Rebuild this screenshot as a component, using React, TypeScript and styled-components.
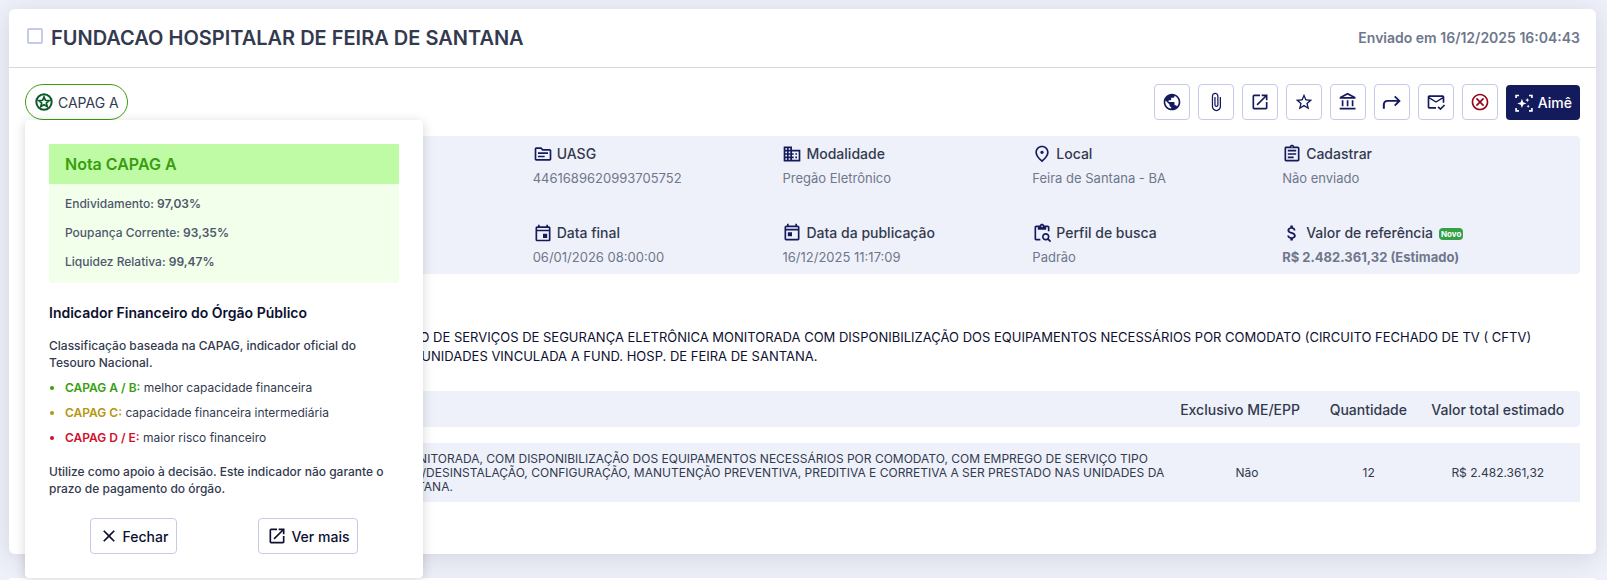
import type { ReactNode } from 'react';
import styled, { createGlobalStyle } from 'styled-components';
import {
  MdAttachFile,
  MdAttachMoney,
  MdClose,
  MdContentPasteSearch,
  MdDomain,
  MdOpenInNew,
  MdOutlineAccountBalance,
  MdOutlineAssignment,
  MdOutlineCancel,
  MdOutlineEvent,
  MdOutlineMarkEmailRead,
  MdOutlinePlace,
  MdOutlineSource,
  MdOutlineToday,
  MdPublic,
  MdStarBorder,
} from 'react-icons/md';

const color = {
  navy: '#141b5c',
  ink: '#0d1030',
  text: '#333a4f',
  muted: '#6e778c',
  panel: '#eef1f9',
  border: '#c5cae9',
};

const GlobalStyle = createGlobalStyle`
  *, *::before, *::after { box-sizing: border-box; }
  body {
    margin: 0;
    background: #eef0fa;
    color: ${color.text};
    font-family: Inter, "Liberation Sans", sans-serif;
    font-size: 14px;
  }
  h1, h2, h3, p, ul, dl, dd { margin: 0; padding: 0; }
  button { font-family: inherit; cursor: pointer; }
  svg { flex: none; }
`;

const Page = styled.main`
  display: flex;
  flex-direction: column;
  gap: 24px;
  min-height: 100vh;
  padding: 9px 11px 0 9px;
`;

const Card = styled.article`
  border-radius: 6px;
  background: #fff;
  box-shadow: 0 4px 24px rgba(40, 50, 60, 0.14);
`;

const NextCard = styled(Card)`
  flex: 1;
  border-radius: 6px 6px 0 0;
`;

const CardHeader = styled.header`
  display: flex;
  align-items: center;
  gap: 8px;
  height: 59px;
  padding: 0 16px 0 18px;
  border-bottom: 1px solid #d6d9dc;
`;

const Checkbox = styled.input`
  appearance: none;
  width: 16px;
  height: 16px;
  margin: 0 0 4px;
  border: 2px solid ${color.border};
  border-radius: 2px;
  background: #fff;
  &:checked { background: ${color.navy}; }
`;

const Title = styled.h1`
  flex: 1;
  font-size: 20px;
  font-weight: 600;
  line-height: 24px;
`;

const SentAt = styled.time`
  color: ${color.muted};
  font-weight: 600;
  line-height: 18px;
`;

const CardBody = styled.div`
  padding: 16px 16px 36px;
`;

const Toolbar = styled.div`
  display: flex;
  justify-content: space-between;
  margin-bottom: 16px;
`;

const RatingAnchor = styled.div`
  position: relative;
`;

const RatingPill = styled.button`
  display: flex;
  align-items: center;
  gap: 4px;
  height: 36px;
  padding: 0 8px;
  border: 1px solid #389e0d;
  border-radius: 18px;
  background: #fff;
  color: ${color.text};
  font-size: 14px;
  svg { color: #0b5a2a; }
`;

const Actions = styled.div`
  display: flex;
  align-items: flex-end;
  gap: 8px;
`;

const IconButton = styled.button<{ $danger?: boolean }>`
  display: grid;
  place-items: center;
  width: 36px;
  height: 36px;
  padding: 0;
  border: 1px solid ${color.border};
  border-radius: 4px;
  background: #fff;
  color: ${(p) => (p.$danger ? '#95061c' : color.navy)};
`;

const AssistantButton = styled.button`
  display: flex;
  align-items: center;
  gap: 4px;
  height: 35px;
  padding: 0 8px;
  border: 0;
  border-radius: 4px;
  background: ${color.navy};
  color: #fff;
  font-size: 14px;
  font-weight: 500;
`;

const Popover = styled.section`
  position: absolute;
  z-index: 1;
  top: 100%;
  left: 0;
  width: 398px;
  padding: 24px;
  border-radius: 4px;
  background: #fff;
  box-shadow: 0 2px 12px rgba(0, 0, 0, 0.16);
  font-size: 12px;
  line-height: 17px;
`;

const ScoreTitle = styled.h2`
  padding: 0 16px;
  background: #bffaa5;
  color: #389e0d;
  font-size: 16px;
  font-weight: 600;
  line-height: 40px;
`;

const ScoreList = styled.ul`
  display: grid;
  gap: 14px;
  padding: 12px 16px 14px;
  background: #f1ffeb;
  color: #4f586b;
  font-weight: 500;
  line-height: 15px;
  list-style: none;
  strong { font-weight: 600; }
`;

const PopoverHeading = styled.h3`
  margin: 20px 0 14px;
  color: ${color.ink};
  font-size: 14px;
  font-weight: 600;
  line-height: 20px;
`;

const PopoverText = styled.p`
  font-weight: 500;
`;

const Legend = styled.ul`
  display: grid;
  gap: 8px;
  margin: 8px 0 17px;
  padding-left: 16px;
  list-style: disc;
`;

const LegendItem = styled.li<{ $tone: string }>`
  &::marker { color: ${(p) => p.$tone}; }
  strong {
    color: ${(p) => p.$tone};
    font-weight: 600;
  }
`;

const PopoverActions = styled.div`
  display: flex;
  justify-content: space-around;
  margin-top: 21px;
`;

const TextButton = styled.button`
  display: flex;
  align-items: center;
  gap: 4px;
  height: 36px;
  padding: 0 8px;
  border: 1px solid ${color.border};
  border-radius: 4px;
  background: #fff;
  color: ${color.ink};
  font-size: 14px;
  font-weight: 500;
`;

const InfoPanel = styled.dl`
  display: grid;
  grid-template-columns: 2fr repeat(4, 1fr);
  gap: 35px 0;
  padding: 8px 48px 7px 8px;
  border-radius: 4px;
  background: ${color.panel};
`;

const InfoItem = styled.div<{ $column?: number }>`
  ${(p) => p.$column && `grid-column: ${p.$column};`}
`;

const InfoLabel = styled.dt`
  display: flex;
  align-items: center;
  gap: 4px;
  line-height: 20px;
  font-weight: 500;
  svg { color: ${color.navy}; }
`;

const InfoValue = styled.dd<{ $strong?: boolean }>`
  && { margin-top: 4px; }
  color: ${color.muted};
  font-size: 13px;
  font-weight: ${(p) => (p.$strong ? 700 : 400)};
  line-height: 20px;
`;

const NewBadge = styled.span`
  margin: 2px 0 0 2px;
  padding: 0 2px;
  border-radius: 4px;
  background: #34a048;
  color: #fff;
  font-size: 8px;
  font-weight: 700;
  line-height: 12px;
`;

const Subject = styled.p`
  && {
    margin-top: 54px;
    margin-bottom: 9px;
    padding: 0 16px 0 15px;
  }
  color: ${color.ink};
  font-size: 13px;
  line-height: 19px;
`;

const Items = styled.table`
  width: 100%;
  border-spacing: 0 16px;
`;

const HeadCell = styled.th<{ $width?: number }>`
  width: ${(p) => (p.$width ? `${p.$width}px` : 'auto')};
  height: 36px;
  padding: 0 8px;
  background: ${color.panel};
  font-weight: 500;
  text-align: left;
  white-space: nowrap;
  &:first-child { border-radius: 4px 0 0 4px; }
  &:last-child {
    border-radius: 0 4px 4px 0;
    text-align: center;
  }
`;

const Cell = styled.td<{ $center?: boolean }>`
  height: 59px;
  padding: 0 8px;
  background: ${color.panel};
  font-size: 12px;
  line-height: 14px;
  text-align: ${(p) => (p.$center ? 'center' : 'left')};
  white-space: nowrap;
`;

const RatingIcon = () => (
  <svg width="20" height="20" viewBox="0 0 24 24" fill="none" stroke="currentColor" strokeWidth="2.4" aria-hidden="true">
    <circle cx="12" cy="12" r="9.2" />
    <path d="M12 5.8l1.7 4.1 4.4.4-3.3 2.9 1 4.3-3.8-2.3-3.8 2.3 1-4.3-3.3-2.9 4.4-.4z" strokeWidth="2" />
  </svg>
);

const ShareIcon = () => (
  <svg width="20" height="20" viewBox="0 0 24 24" fill="currentColor" aria-hidden="true">
    <path d="M1 20v-5q0-2.300 1.600-3.900T6.500 9.500h11.700L14.500 5.900 16 4.400l6.500 6.300L16 17l-1.500-1.500 3.700-3.700H6.500q-1.300 0-2.200.9t-.9 2.300v5z" />
  </svg>
);

const AssistantIcon = () => (
  <svg width="20" height="20" viewBox="0 0 24 24" fill="none" stroke="currentColor" strokeWidth="2" aria-hidden="true">
    <path d="M2.500 6V3H6M18 3h3.500v3M21.500 18v3.500H18M6 21.500H2.500V18" />
    <path
      d="M9.500 7l1.500 4L15 12.500l-4 1.500L9.500 18l-1.500-4-4-1.500L8 11zM16 6l.7 1.800 1.800.7-1.800.7L16 11l-.7-1.800-1.800-.7 1.800-.7zM17 14l.6 1.400 1.400.6-1.400.6L17 18l-.6-1.400L15 16l1.400-.6z"
      fill="currentColor"
      stroke="none"
    />
  </svg>
);

type Info = { icon: ReactNode; label: string; value: string; column?: number; isNew?: boolean };

const details: Info[] = [
  { icon: <MdOutlineSource size={20} />, label: 'UASG', value: '4461689620993705752', column: 2 },
  { icon: <MdDomain size={20} />, label: 'Modalidade', value: 'Pregão Eletrônico' },
  { icon: <MdOutlinePlace size={20} />, label: 'Local', value: 'Feira de Santana - BA' },
  { icon: <MdOutlineAssignment size={20} />, label: 'Cadastrar', value: 'Não enviado' },
  { icon: <MdOutlineEvent size={20} />, label: 'Data final', value: '06/01/2026 08:00:00', column: 2 },
  { icon: <MdOutlineToday size={20} />, label: 'Data da publicação', value: '16/12/2025 11:17:09' },
  { icon: <MdContentPasteSearch size={20} />, label: 'Perfil de busca', value: 'Padrão' },
  { icon: <MdAttachMoney size={20} />, label: 'Valor de referência', value: 'R$ 2.482.361,32 (Estimado)', isNew: true },
];

const actions: { label: string; icon: ReactNode; danger?: boolean }[] = [
  { label: 'Portal', icon: <MdPublic size={20} /> },
  { label: 'Anexos', icon: <MdAttachFile size={20} /> },
  { label: 'Abrir', icon: <MdOpenInNew size={20} /> },
  { label: 'Favoritar', icon: <MdStarBorder size={20} /> },
  { label: 'Órgão', icon: <MdOutlineAccountBalance size={20} /> },
  { label: 'Encaminhar', icon: <ShareIcon /> },
  { label: 'Marcar como lido', icon: <MdOutlineMarkEmailRead size={20} /> },
  { label: 'Descartar', icon: <MdOutlineCancel size={20} />, danger: true },
];

const scores = [
  ['Endividamento', '97,03%'],
  ['Poupança Corrente', '93,35%'],
  ['Liquidez Relativa', '99,47%'],
];

const legend = [
  { name: 'CAPAG A / B:', meaning: 'melhor capacidade financeira', tone: '#389e0d' },
  { name: 'CAPAG C:', meaning: 'capacidade financeira intermediária', tone: '#b5960f' },
  { name: 'CAPAG D / E:', meaning: 'maior risco financeiro', tone: '#d0102c' },
];

function RatingPopover() {
  return (
    <Popover aria-label="Nota CAPAG">
      <ScoreTitle>Nota CAPAG A</ScoreTitle>
      <ScoreList>
        {scores.map(([name, value]) => (
          <li key={name}>
            {name}: <strong>{value}</strong>
          </li>
        ))}
      </ScoreList>
      <PopoverHeading>Indicador Financeiro do Órgão Público</PopoverHeading>
      <PopoverText>Classificação baseada na CAPAG, indicador oficial do Tesouro Nacional.</PopoverText>
      <Legend>
        {legend.map((item) => (
          <LegendItem key={item.name} $tone={item.tone}>
            <strong>{item.name}</strong> {item.meaning}
          </LegendItem>
        ))}
      </Legend>
      <PopoverText>
        Utilize como apoio à decisão. Este indicador não garante o prazo de pagamento do órgão.
      </PopoverText>
      <PopoverActions>
        <TextButton type="button">
          <MdClose size={20} />
          Fechar
        </TextButton>
        <TextButton type="button">
          <MdOpenInNew size={20} />
          Ver mais
        </TextButton>
      </PopoverActions>
    </Popover>
  );
}

export default function App() {
  return (
    <>
      <GlobalStyle />
      <Page>
        <Card>
          <CardHeader>
            <Checkbox type="checkbox" aria-labelledby="buyer" />
            <Title id="buyer">FUNDACAO HOSPITALAR DE FEIRA DE SANTANA</Title>
            <SentAt dateTime="2025-12-16T16:04:43">Enviado em 16/12/2025 16:04:43</SentAt>
          </CardHeader>
          <CardBody>
            <Toolbar>
              <RatingAnchor>
                <RatingPill type="button" aria-expanded="true">
                  <RatingIcon />
                  CAPAG A
                </RatingPill>
                <RatingPopover />
              </RatingAnchor>
              <Actions>
                {actions.map((action) => (
                  <IconButton key={action.label} type="button" aria-label={action.label} $danger={action.danger}>
                    {action.icon}
                  </IconButton>
                ))}
                <AssistantButton type="button">
                  <AssistantIcon />
                  Aimê
                </AssistantButton>
              </Actions>
            </Toolbar>

            <InfoPanel>
              {details.map((item) => (
                <InfoItem key={item.label} $column={item.column}>
                  <InfoLabel>
                    {item.icon}
                    {item.label}
                    {item.isNew && <NewBadge>Novo</NewBadge>}
                  </InfoLabel>
                  <InfoValue $strong={item.isNew}>{item.value}</InfoValue>
                </InfoItem>
              ))}
            </InfoPanel>

            <Subject>
              CONTRATAÇÃO DE EMPRESA ESPECIALIZADA NA PRESTAÇÃO DE SERVIÇOS DE SEGURANÇA ELETRÔNICA MONITORADA COM
              DISPONIBILIZAÇÃO DOS EQUIPAMENTOS NECESSÁRIOS POR COMODATO (CIRCUITO FECHADO DE TV ( CFTV)
              <br />
              PARA ATENDER AS NECESSIDADES DAS DIVERSAS SEDES, E UNIDADES VINCULADA A FUND. HOSP. DE FEIRA DE SANTANA.
            </Subject>

            <Items>
              <thead>
                <tr>
                  <HeadCell $width={34} aria-label="Item" />
                  <HeadCell>Descrição</HeadCell>
                  <HeadCell $width={150}>Exclusivo ME/EPP</HeadCell>
                  <HeadCell $width={94}>Quantidade</HeadCell>
                  <HeadCell $width={165}>Valor total estimado</HeadCell>
                </tr>
              </thead>
              <tbody>
                <tr>
                  <Cell $center>1</Cell>
                  <Cell>
                    PRESTAÇÃO DE SERVIÇOS DE SEGURANÇA ELETRÔNICA MONITORADA, COM DISPONIBILIZAÇÃO DOS EQUIPAMENTOS
                    NECESSÁRIOS POR COMODATO, COM EMPREGO DE SERVIÇO TIPO
                    <br />
                    SISTEMAS CFTV - INCLUINDO OS SERVIÇOS DE INSTALAÇÃO/DESINSTALAÇÃO, CONFIGURAÇÃO, MANUTENÇÃO
                    PREVENTIVA, PREDITIVA E CORRETIVA A SER PRESTADO NAS UNIDADES DA
                    <br />
                    TODA A REDE DA FUNDAÇÃO HOSPITALAR DE FEIRA DE SANTANA.
                  </Cell>
                  <Cell $center>Não</Cell>
                  <Cell $center>12</Cell>
                  <Cell $center>R$ 2.482.361,32</Cell>
                </tr>
              </tbody>
            </Items>
          </CardBody>
        </Card>
        <NextCard aria-hidden="true" />
      </Page>
    </>
  );
}
